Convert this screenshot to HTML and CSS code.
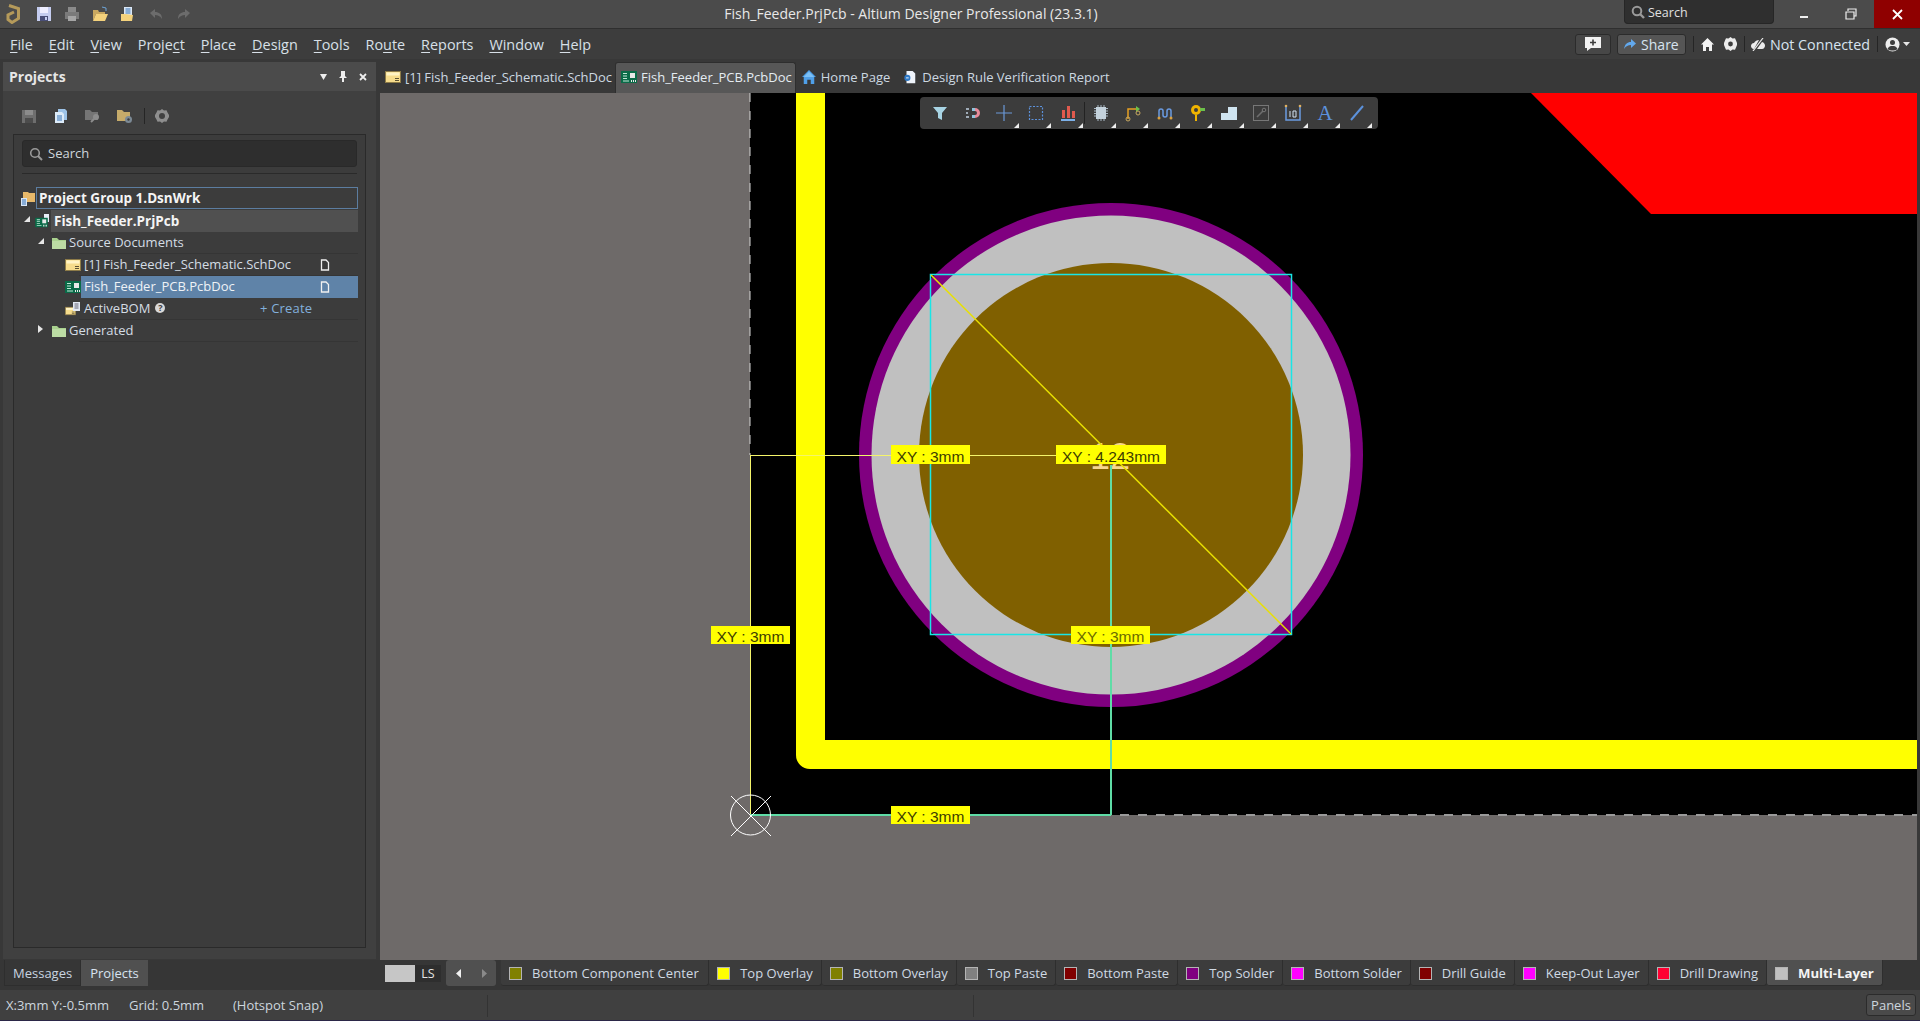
FILE: index.html
```html
<!DOCTYPE html>
<html lang="en">
<head>
  <meta charset="UTF-8">
  <title>Fish_Feeder.PrjPcb - Altium Designer Professional (23.3.1)</title>
  <link rel="stylesheet" href="styles.css">
</head>
<body>
<svg class="defs" width="0" height="0">
  <symbol id="pcbdoc" viewBox="0 0 16 14"><rect y="1" width="16" height="12" fill="#0a6b48"/><path d="M2 3h4v1H2zM2 5.500h4v1H2zM2 8h4v1H2zM2 10.500h6v1H2z" fill="#bfe8d5"/><rect x="9" y="3" width="5" height="5" fill="#e8e8e8"/><path d="M10 10h1v2h-1zM12 10h1v2h-1zM14 10h1v2h-1z" fill="#e8e8e8"/></symbol>
  <symbol id="schdoc" viewBox="0 0 16 14"><rect x=".5" y="1.500" width="15" height="11" fill="#f6dc8c" stroke="#8d7b48"/><rect x="1.500" y="2.500" width="13" height="3" fill="#fff3c4"/><path d="M10 8.500h4M10 10.500h4" stroke="#5c5233"/></symbol>
  <symbol id="folder" viewBox="0 0 16 14"><path d="M1 2h5l2 2h7v9H1z" fill="#a9d18e"/><path d="M1 5h14v8H1z" fill="#bcdca4"/></symbol>
  <symbol id="arrow-open" viewBox="0 0 6 6"><path d="M6 0v6H0z" fill="#e6e6e6"/></symbol>
  <symbol id="arrow-closed" viewBox="0 0 6 8"><path d="M0 0l5 4-5 4z" fill="#e6e6e6"/></symbol>
  <symbol id="page" viewBox="0 0 10 12"><path d="M1.500 1h4.500l2.500 2.500V11h-7z" fill="none" stroke="#f0f0f0" stroke-width="1.300"/></symbol>
</svg>

<header class="titlebar">
  <div class="quick">
    <svg class="logo" width="16" height="20" viewBox="0 0 16 20"><path d="M3 1.500l9.500 3v10l-6.500 4-4-3V11l6-3" fill="none" stroke="#b59a5a" stroke-width="3"/></svg>
    <svg class="qa" viewBox="0 0 16 16"><path d="M1 1h14v14H1z" fill="#c5cdf0"/><path d="M4 1h8v6H4z" fill="#eef"/><path d="M4 10h8v5H4z" fill="#4a4f78"/><path d="M9 11h2v3H9z" fill="#c5cdf0"/></svg>
    <svg class="qa" viewBox="0 0 16 16"><path d="M4 1h8v5H4z" fill="#8a8a8a"/><path d="M1 6h14v7H1z" fill="#7a7a7a"/><path d="M4 10h8v5H4z" fill="#a5a5a5"/></svg>
    <svg class="qa" viewBox="0 0 16 16"><path d="M1 4h5l1 2h6v2H4l-3 7z" fill="#c9a860"/><path d="M4 8h12l-3 7H1z" fill="#f4d27c"/><path d="M10 1l4 1v3" fill="none" stroke="#6ea5d8"/></svg>
    <svg class="qa" viewBox="0 0 16 16"><path d="M4 1h8v9H4z" fill="#dbe8f6"/><path d="M5.500 3h5M5.500 5h5M5.500 7h5" stroke="#3672b5"/><path d="M1 8h4l8 1-1 6H1z" fill="#f4d27c"/></svg>
    <svg class="qa" viewBox="0 0 16 16"><path d="M2 7l5-4v3c4 0 7 2 7 7-2-3-4-4-7-4v3z" fill="#6c6c6c"/></svg>
    <svg class="qa" viewBox="0 0 16 16"><path d="M14 7L9 3v3C5 6 2 8 2 13c2-3 4-4 7-4v3z" fill="#6c6c6c"/></svg>
  </div>
  <div class="app-title">Fish_Feeder.PrjPcb - Altium Designer Professional (23.3.1)</div>
  <div class="title-search">
    <svg width="14" height="14" viewBox="0 0 14 14"><circle cx="6" cy="6" r="4.300" fill="none" stroke="#9a9a9a" stroke-width="2"/><path d="M9 9l4 4" stroke="#9a9a9a" stroke-width="2.400"/></svg>
    <span>Search</span>
  </div>
  <div class="win-btn">
    <svg width="10" height="10" viewBox="0 0 10 10"><path d="M1 8h8" stroke="#eee" stroke-width="2"/></svg>
  </div>
  <div class="win-btn">
    <svg width="12" height="12" viewBox="0 0 12 12"><path d="M3 3V1h8v7H9M1 4h8v7H1z" fill="none" stroke="#eee" stroke-width="1.200"/></svg>
  </div>
  <div class="win-btn close">
    <svg width="11" height="11" viewBox="0 0 11 11"><path d="M1 1l9 9M10 1l-9 9" stroke="#fff" stroke-width="1.800"/></svg>
  </div>
</header>

<div class="menubar">
  <nav class="menu">
    <span><u>F</u>ile</span>
    <span><u>E</u>dit</span>
    <span><u>V</u>iew</span>
    <span>Proje<u>c</u>t</span>
    <span><u>P</u>lace</span>
    <span><u>D</u>esign</span>
    <span><u>T</u>ools</span>
    <span>Ro<u>u</u>te</span>
    <span><u>R</u>eports</span>
    <span><u>W</u>indow</span>
    <span><u>H</u>elp</span>
  </nav>
  <div class="account">
    <button class="chip feedback">
      <svg width="18" height="16" viewBox="0 0 18 16"><path d="M1 1h16v11H7l-4 3v-3H1z" fill="#f2f2f2"/><path d="M9 3.500v6M6 6.500h6" stroke="#3d3d3d" stroke-width="1.600"/></svg>
    </button>
    <button class="chip share">
      <svg width="12" height="11" viewBox="0 0 12 11"><path d="M12 4.500L7 0v3C3 3 1 5 0 10c2-3 4-4 7-4v3z" fill="#62a8ec"/></svg>
      Share
    </button>
    <i class="vsep"></i>
    <svg class="home-ic" width="13" height="13" viewBox="0 0 13 13"><path d="M6.500 0L13 6.500h-2V13H8V9H5v4H2V6.500H0z" fill="#f2f2f2"/></svg>
    <svg class="gear-ic" width="13" height="14" viewBox="0 0 13 14"><path d="M6.500 0l2 1.500 2.500-.3 1 2.300L13 6v2l-1 2.500-1 2.300-2.500-.3L6.500 14l-2-1.500-2.500.3-1-2.300L0 8V6l1-2.500 1-2.300 2.500.3z" fill="#ececec"/><circle cx="6.500" cy="7" r="2.400" fill="#3d3d3d"/></svg>
    <i class="vsep"></i>
    <svg class="cloud-ic" width="14" height="13" viewBox="0 0 14 13"><path d="M3 11C1 11 0 9.500 0 8s1-3 3-3c1-2 3-3 5-3l-5 9zM6 11l5-7c2 .5 3 2 3 3.500S13 11 11 11z" fill="#ececec"/><path d="M2 13L12 0" stroke="#ececec" stroke-width="1.200"/></svg>
    <span class="not-connected">Not Connected</span>
    <i class="vsep"></i>
    <svg class="user-ic" width="15" height="15" viewBox="0 0 15 15"><circle cx="7.500" cy="7.500" r="7" fill="#ededed"/><circle cx="7.500" cy="5.500" r="2.500" fill="#3d3d3d"/><path d="M2.500 12c1-2.500 3-3 5-3s4 .5 5 3c-2.500 2-7.500 2-10 0z" fill="#3d3d3d"/></svg>
    <svg class="caret-ic" width="7" height="4" viewBox="0 0 7 4"><path d="M0 0h7L3.500 4z" fill="#e6e6e6"/></svg>
  </div>
</div>

<main class="workspace">
  <aside class="panel">
    <div class="panel-head">
      <strong>Projects</strong>
      <div class="panel-ctl">
        <svg width="7" height="6" viewBox="0 0 7 6"><path d="M0 0h7L3.500 6z" fill="#eee"/></svg>
        <svg width="8" height="11" viewBox="0 0 8 11"><path d="M2 0h4v5l2 2H5v4H3V7H0l2-2z" fill="#eee"/></svg>
        <svg width="8" height="8" viewBox="0 0 8 8"><path d="M1 1l6 6M7 1L1 7" stroke="#eee" stroke-width="1.800"/></svg>
      </div>
    </div>
    <div class="panel-tools">
      <svg viewBox="0 0 16 16"><path d="M1 2h14v13H1z" fill="#6e6e6e"/><path d="M4 2h8v5H4z" fill="#8c8c8c"/><path d="M4 10h8v5H4z" fill="#4c4c4c"/></svg>
      <svg viewBox="0 0 16 16"><path d="M5 1h7l2 2v9H5z" fill="#9dc3e8"/><path d="M2 4h7l2 2v9H2z" fill="#dcebf9"/><path d="M4 8h5M4 10h5M4 12h5" stroke="#3672b5"/></svg>
      <svg viewBox="0 0 16 16"><path d="M0 2h5l2 2h6v8H0z" fill="#757575"/><circle cx="11" cy="9" r="3" fill="#8d8d8d"/><path d="M9 11l-3 3" stroke="#8d8d8d" stroke-width="2"/></svg>
      <svg viewBox="0 0 16 16"><path d="M0 2h5l2 2h6v9H0z" fill="#c6ab6a"/><circle cx="11.500" cy="11.500" r="3.500" fill="#7c8a96"/><circle cx="11.500" cy="11.500" r="1.200" fill="#3d3d3d"/></svg>
      <i class="vsep"></i>
      <svg viewBox="0 0 16 16"><path d="M8 1l2 1.500 2.500-.3 1 2.300L15 7v2l-1.500 2.500-1 2.300-2.500-.3L8 15l-2-1.500-2.500.3-1-2.300L1 9V7l1.500-2.500 1-2.300 2.500.3z" fill="#8e8e8e"/><circle cx="8" cy="8" r="3" fill="#404040"/></svg>
    </div>
    <div class="tree-box">
      <div class="panel-search">
        <svg width="14" height="14" viewBox="0 0 14 14"><circle cx="6" cy="6" r="4.300" fill="none" stroke="#9a9a9a" stroke-width="1.600"/><path d="M9 9l4 4" stroke="#9a9a9a" stroke-width="2"/></svg>
        <span>Search</span>
      </div>
      <div class="tree">
        <div class="row group">
          <svg class="ic" viewBox="0 0 16 14"><path d="M3 0h5l1 1h6v9H3z" fill="#e8b96a"/><path d="M1 6h6v8H1z" fill="#d8e6f6"/><path d="M2 8h4M2 10h4M2 12h4" stroke="#3672b5"/></svg>
          <div class="cell sel-box"><b>Project Group 1.DsnWrk</b></div>
        </div>
        <div class="row d1">
          <svg class="tw"><use href="#arrow-open" width="6" height="6" y="6"/></svg>
          <svg class="ic" viewBox="0 0 16 14"><path d="M9 0h5v8H9z" fill="#e8eef8"/><use href="#pcbdoc" y="3" width="13" height="11"/></svg>
          <div class="cell focus"><b>Fish_Feeder.PrjPcb</b></div>
        </div>
        <div class="row d2 ruled">
          <svg class="tw"><use href="#arrow-open" width="6" height="6" y="6"/></svg>
          <svg class="ic"><use href="#folder"/></svg>
          <div class="cell">Source Documents</div>
        </div>
        <div class="row d3 ruled">
          <svg class="ic"><use href="#schdoc"/></svg>
          <div class="cell">[1] Fish_Feeder_Schematic.SchDoc<svg class="pg"><use href="#page"/></svg></div>
        </div>
        <div class="row d3">
          <svg class="ic"><use href="#pcbdoc"/></svg>
          <div class="cell active">Fish_Feeder_PCB.PcbDoc<svg class="pg"><use href="#page"/></svg></div>
        </div>
        <div class="row d3 ruled">
          <svg class="ic" viewBox="0 0 16 14"><use href="#schdoc" width="11" height="10" y="4"/><path d="M8 0h7v9H8z" fill="#e2e8f2"/><path d="M9.500 2h4M9.500 4h4M9.500 6h4" stroke="#667"/></svg>
          <div class="cell">ActiveBOM <span class="help">?</span><span class="create">+ Create</span></div>
        </div>
        <div class="row d2 ruled">
          <svg class="tw"><use href="#arrow-closed" width="6" height="8" y="5"/></svg>
          <svg class="ic"><use href="#folder"/></svg>
          <div class="cell">Generated</div>
        </div>
      </div>
    </div>
  </aside>

  <section class="docs">
    <div class="doc-tabs">
      <div class="doc-tab"><svg class="ic"><use href="#schdoc"/></svg>[1] Fish_Feeder_Schematic.SchDoc</div>
      <div class="doc-tab on"><svg class="ic"><use href="#pcbdoc"/></svg>Fish_Feeder_PCB.PcbDoc</div>
      <div class="doc-tab"><svg class="ic" viewBox="0 0 16 16"><path d="M8 0L0 8h2v8h4v-5h4v5h4V8h2z" fill="#4f9fe8"/><path d="M8 2L2 8h12z" fill="#7cc0f5"/></svg>Home Page</div>
      <div class="doc-tab report"><svg class="ic" viewBox="0 0 16 16"><path d="M4 1h7l3 3v11H4z" fill="#eef3fa"/><circle cx="5" cy="9" r="3.500" fill="#2e79c7"/><path d="M3.500 9h3" stroke="#fff"/></svg>Design Rule Verification Report</div>
    </div>
    <div class="canvas">
      <svg class="board" viewBox="380 93 1537 867" width="1537" height="867">
        <rect x="380" y="93" width="1537" height="867" fill="#6e6a69"/>
        <rect x="750" y="93" width="1167" height="722" fill="#000"/>
        <path d="M750 93V455" stroke="#d8d8d8" stroke-dasharray="9 9"/>
        <path d="M1120 815H1917" stroke="#9a9a9a" stroke-width="2" stroke-dasharray="9 9"/>
        <path d="M1531 93H1917V214H1651Z" fill="#f00"/>
        <path d="M796 93V755A14 14 0 0 0 810 769H1917V740H825V93Z" fill="#ff0"/>
        <circle cx="1111" cy="455" r="252" fill="#800080"/>
        <circle cx="1111" cy="455" r="239.500" fill="#c0c0c0"/>
        <circle cx="1111" cy="455" r="192" fill="#806000"/>
        <text class="pad-no" x="1090" y="469">12</text>
        <rect x="930.500" y="274.500" width="361" height="360" fill="none" stroke="#19e6e6" stroke-width="1.500"/>
        <path d="M931 275L1291 634" stroke="#e8e000" stroke-width="1.500"/>
        <path d="M750 455.500H1111M750.500 455V815" stroke="#f4f46a" stroke-width="1"/>
        <path d="M1111 465V815M750 815H1111" stroke="#5fdca6" stroke-width="2"/>
        <g class="dim">
          <rect x="891" y="445" width="79" height="19"/><text x="930.500" y="462">XY : 3mm</text>
          <rect x="1056" y="445" width="110" height="19"/><text x="1111" y="462">XY : 4.243mm</text>
          <rect x="711" y="626" width="79" height="18"/><text x="750.500" y="642">XY : 3mm</text>
          <rect x="1071" y="626" width="79" height="18"/><text x="1110.500" y="642" class="soft">XY : 3mm</text>
          <rect x="891" y="806" width="79" height="18"/><text x="930.500" y="822">XY : 3mm</text>
        </g>
        <g fill="none" stroke="#fff">
          <circle cx="750.500" cy="815" r="20"/>
          <path d="M731 796L771 836M771 796L731 836"/>
        </g>
      </svg>
      <div class="pcb-tools">
        <button class="tool plain"><svg viewBox="0 0 18 18"><path d="M2 3h14l-5 6v7l-4-2V9z" fill="#a8d4e4"/></svg></button>
        <button class="tool plain"><svg viewBox="0 0 18 18"><path d="M9 4h3a5 5 0 0 1 0 10H9v-3h3a2 2 0 0 0 0-4H9z" fill="#e88a9a"/><path d="M9 4h3v3H9zM9 11h3v3H9z" fill="#8fc4dc"/><path d="M3 5h3M3 9h2M3 13h3" stroke="#c0d0e0" stroke-width="1.500"/></svg></button>
        <button class="tool"><svg viewBox="0 0 18 18"><path d="M9 1v16M1 9h16" stroke="#6a98d8" stroke-width="1.200"/></svg></button>
        <button class="tool"><svg viewBox="0 0 18 18"><rect x="2.500" y="2.500" width="13" height="13" fill="none" stroke="#5c92dc" stroke-width="1.200" stroke-dasharray="2 1.500"/></svg></button>
        <button class="tool"><svg viewBox="0 0 18 18"><path d="M3 6h3v8H3zM8 2h3v12H8zM13 7h3v7h-3z" fill="#e05a4e"/><path d="M2 16h14" stroke="#7cb0e8" stroke-width="2"/></svg></button>
        <i class="tool-sep"></i>
        <button class="tool"><svg viewBox="0 0 18 18"><rect x="4" y="3" width="10" height="12" fill="#c4d2dc"/><path d="M2 4.500h2M2 7h2M2 9.500h2M2 12h2M14 4.500h2M14 7h2M14 9.500h2M14 12h2M6 1v2M9 1v2M12 1v2M6 15v2M9 15v2M12 15v2" stroke="#a8b8c4"/></svg></button>
        <button class="tool"><svg viewBox="0 0 18 18"><path d="M4 15V5h9" fill="none" stroke="#e8a020" stroke-width="1.500"/><path d="M12 2l4 3-4 3z" fill="#6cc04a"/><circle cx="4" cy="15" r="2" fill="none" stroke="#c8a860"/><circle cx="14" cy="9" r="2" fill="none" stroke="#c8a860"/></svg></button>
        <button class="tool"><svg viewBox="0 0 18 18"><path d="M3 13V7a2 2 0 0 1 4 0v4a2 2 0 0 0 4 0V7a2 2 0 0 1 4 0v6" fill="none" stroke="#6a9ae0" stroke-width="1.500"/><circle cx="3" cy="14" r="1.500" fill="#d8a040"/><circle cx="15" cy="14" r="1.500" fill="#d8a040"/></svg></button>
        <button class="tool"><svg viewBox="0 0 18 18"><circle cx="8" cy="6" r="5" fill="#f0b400"/><circle cx="8" cy="6" r="2" fill="#3c3c3c"/><path d="M7 11h2v6H7z" fill="#f0b400"/><path d="M12 4h5v3h-5z" fill="#6cc04a"/></svg></button>
        <button class="tool"><svg viewBox="0 0 18 18"><path d="M1 9h7V3h9v13H1z" fill="#cfe4f0"/></svg></button>
        <button class="tool"><svg viewBox="0 0 18 18"><rect x="1.500" y="1.500" width="15" height="15" fill="none" stroke="#777"/><path d="M5 13l6-6" stroke="#6d6d6d" stroke-width="1.600"/><circle cx="12" cy="6" r="1.800" fill="none" stroke="#777"/></svg></button>
        <button class="tool"><svg viewBox="0 0 18 18"><path d="M2 2v14h14V2" fill="none" stroke="#6a9ae0" stroke-width="1.500"/><circle cx="2" cy="2" r="1.300" fill="#e0b060"/><circle cx="16" cy="2" r="1.300" fill="#e0b060"/><path d="M6 7v6M9 7h3v6H9z" fill="none" stroke="#cfe0f0"/></svg></button>
        <button class="tool letter">A</button>
        <button class="tool"><svg viewBox="0 0 18 18"><path d="M3 16L15 2" stroke="#5c92dc" stroke-width="2"/></svg></button>
      </div>
    </div>
  </section>
</main>

<div class="strip">
  <div class="side-tabs">
    <span>Messages</span>
    <span class="on">Projects</span>
  </div>
  <div class="current-layer"><i></i><b>LS</b></div>
  <div class="layer-nav">
    <svg width="6" height="9" viewBox="0 0 6 9"><path d="M5 0v9L0 4.500z" fill="#f0f0f0"/></svg>
    <svg width="6" height="9" viewBox="0 0 6 9"><path d="M1 0v9l5-4.500z" fill="#8a8a8a"/></svg>
  </div>
  <div class="layers">
    <div class="layer"><i class="c-olive"></i>Bottom Component Center</div>
    <div class="layer"><i class="c-yellow"></i>Top Overlay</div>
    <div class="layer"><i class="c-olive"></i>Bottom Overlay</div>
    <div class="layer"><i class="c-grey"></i>Top Paste</div>
    <div class="layer"><i class="c-maroon"></i>Bottom Paste</div>
    <div class="layer"><i class="c-purple"></i>Top Solder</div>
    <div class="layer"><i class="c-pink"></i>Bottom Solder</div>
    <div class="layer"><i class="c-maroon"></i>Drill Guide</div>
    <div class="layer"><i class="c-pink"></i>Keep-Out Layer</div>
    <div class="layer"><i class="c-red"></i>Drill Drawing</div>
    <div class="layer on"><i class="c-silver"></i>Multi-Layer</div>
  </div>
</div>

<footer class="status">
  <span class="coords">X:3mm Y:-0.5mm</span>
  <span class="grid">Grid: 0.5mm</span>
  <span class="snap">(Hotspot Snap)</span>
  <i class="stat-sep first"></i>
  <i class="stat-sep second"></i>
  <button class="panels">Panels</button>
</footer>
</body>
</html>
```

FILE: styles.css
```css
* { box-sizing: border-box; }
html, body { margin: 0; height: 100%; }
body { width: 1920px; height: 1021px; overflow: hidden; display: flex; flex-direction: column; font-family: "Open Sans", "Noto Sans", sans-serif; font-size: 13px; color: #d4dce4; background: #3d3d3d; }
svg { display: block; flex: none; }
.defs { position: absolute; }
button { font: inherit; color: inherit; }
u { text-underline-offset: 2px; }
.ic { width: 16px; height: 14px; }

.titlebar { height: 29px; flex: none; display: flex; align-items: flex-start; background: #4b4b4b; border-bottom: 1px solid #2f2f2f; }
.quick { width: 596px; height: 28px; display: flex; align-items: center; padding-left: 6px; }
.logo { margin-right: 14px; }
.qa { width: 16px; height: 16px; margin-right: 12px; }
.app-title { width: 630px; height: 28px; line-height: 28px; text-align: center; font-size: 14px; color: #e8e8e8; }
.title-search { width: 150px; height: 24px; margin-left: 398px; margin-right: 6px; display: flex; align-items: center; gap: 3px; padding-left: 6px; background: #2f2f2f; border: 1px solid #262626; border-top: 0; border-radius: 0 0 4px 4px; font-size: 12.500px; color: #e0e0e0; }
.title-search span { padding-top: 1px; }
.win-btn { width: 47px; height: 28px; display: flex; align-items: center; justify-content: center; }
.win-btn.close { width: 46px; background: #8f0000; }

.menubar { height: 30px; flex: none; display: flex; align-items: center; justify-content: space-between; background: #3d3d3d; padding: 0 0 0 2px; }
.menu { display: flex; }
.menu span { padding: 0 8px; font-size: 14.400px; color: #d8e0e8; }
.account { display: flex; align-items: center; font-size: 14.300px; padding-right: 9px; }
.chip { height: 21px; display: flex; align-items: center; justify-content: center; border: 1px solid #2b2b2b; border-radius: 3px; background: #474747; padding: 0; }
.feedback { width: 36px; margin-right: 6px; }
.share { width: 69px; gap: 5px; background: #555; color: #d8e4f0; font-size: 14px; }
.vsep { width: 1px; height: 16px; background: #252525; flex: none; }
.account > .vsep:nth-of-type(1) { margin-left: 7px; }
.home-ic { margin-left: 7px; }
.gear-ic { margin-left: 10px; margin-right: 7px; }
.cloud-ic { margin-left: 6px; margin-right: 5px; }
.not-connected { margin-right: 7px; color: #d8e4f0; }
.user-ic { margin-left: 7px; margin-right: 3px; }
.caret-ic { margin-right: 1px; }

.workspace { flex: 1; min-height: 0; display: flex; background: #383838; }
.panel { width: 373px; margin: 3px 0 1px 3px; background: #404040; display: flex; flex-direction: column; padding-bottom: 11px; }
.panel-head { height: 29px; flex: none; display: flex; align-items: center; justify-content: space-between; padding: 0 9px 0 6px; background: #4b4b4b; }
.panel-head strong { font-size: 14px; color: #e6e6e6; }
.panel-ctl { display: flex; align-items: center; gap: 12px; }
.panel-tools { height: 43px; flex: none; display: flex; align-items: center; padding: 6px 0 0 18px; }
.panel-tools svg { width: 16px; height: 16px; margin-right: 16px; }
.panel-tools .vsep { margin-right: 9px; margin-left: -5px; }

.tree-box { flex: 1; margin: 0 10px; background: #3c3c3c; border: 1px solid #2a2a2a; }
.panel-search { height: 27px; margin: 5px 8px 0; display: flex; align-items: center; gap: 5px; padding-left: 6px; background: #2e2e2e; border: 1px solid #292929; border-radius: 3px; font-size: 13px; color: #cfd6dc; }
.panel-search span { padding-bottom: 2px; }
.tree { margin-top: 6px; border-top: 1px solid #2a2a2a; margin-left: 8px; margin-right: 8px; padding-top: 14px; }
.row { height: 22px; margin-left: -8px; margin-right: -1px; display: flex; align-items: stretch; }
.row .ic { align-self: center; }
.tw { width: 6px; height: 22px; }
.cell { flex: 1; display: flex; align-items: center; padding: 0 0 2px 3px; position: relative; }
.cell b { color: #f4f4f4; font-size: 13.500px; }
.group { padding-left: 6px; }
.sel-box { border: 1px solid #5c7da0; margin-top: -1px; height: 22px; padding: 0 0 0 2px; }
.d1 { padding-left: 10px; }
.d1 .tw { margin-right: 5px; }
.focus { background: #505050; padding: 0 0 0 3px; }
.d2 { padding-left: 24px; }
.d2 .tw { margin-right: 7px; }
.d2 .cell { padding-left: 2px; }
.d3 { padding-left: 51px; }
.ruled { position: relative; }
.ruled::after { content: ""; position: absolute; left: 65px; right: 0; bottom: 0; height: 1px; background: #353535; }
.active { background: #5f83a8; color: #eef2f6; }
.pg { width: 10px; height: 12px; position: absolute; left: 239px; top: 5px; }
.help { display: inline-block; width: 10px; height: 10px; margin-left: 5px; border-radius: 50%; background: #d8d8d8; color: #3c3c3c; font-size: 9px; line-height: 10px; text-align: center; font-weight: bold; }
.create { position: absolute; left: 179px; color: #82b0dc; letter-spacing: .2px; }

.docs { flex: 1; min-width: 0; display: flex; flex-direction: column; margin-left: 4px; margin-right: 3px; }
.doc-tabs { height: 34px; flex: none; display: flex; align-items: flex-end; }
.doc-tab { height: 31px; display: flex; align-items: center; gap: 4px; padding: 0 3px 2px 5px; color: #cdd8e2; white-space: nowrap; font-size: 13px; }
.doc-tab.on { background: #575757; border: 1px solid #2e2e2e; border-bottom: 0; border-radius: 3px 3px 0 0; color: #e4ecf2; }
.doc-tab.report { margin-left: 4px; }
.canvas { flex: 1; position: relative; overflow: hidden; }
.dim rect { fill: #ff0; }
.dim text { font-family: "Liberation Sans", sans-serif; font-size: 15.500px; text-anchor: middle; fill: #3c3c00; }
.dim text.soft { fill: #6a6a00; }
.pad-no { font-family: "Liberation Sans", sans-serif; font-size: 36px; fill: #f7d78e; }
.pcb-tools { position: absolute; left: 540px; top: 4px; width: 458px; height: 32px; display: flex; align-items: center; padding-left: 4px; background: #3c3c3c; border-radius: 4px; }
.tool { width: 32px; height: 32px; padding: 0; border: 0; background: none; position: relative; display: flex; align-items: center; justify-content: center; }
.tool svg { width: 18px; height: 18px; }
.tool::after { content: ""; position: absolute; right: 1px; bottom: 1px; border-style: solid; border-width: 0 0 5px 5px; border-color: transparent transparent #eee transparent; }
.tool.plain::after { display: none; }
.tool-sep { width: 1px; height: 22px; background: #222; flex: none; }
.letter { font-family: "Liberation Serif", serif; font-size: 21px; color: #5c92dc; }

.strip { height: 30px; flex: none; display: flex; align-items: flex-start; background: #363636; }
.side-tabs { width: 385px; display: flex; padding-left: 4px; }
.side-tabs span { height: 26px; line-height: 27px; padding: 0 8px; border: 1px solid #2e2e2e; border-top: 0; color: #c8d4e0; }
.side-tabs span.on { background: #505050; border-color: #505050; color: #d8e4f0; }
.current-layer { width: 56px; height: 17px; margin-top: 5px; display: flex; background: #2e2e2e; }
.current-layer i { width: 30px; background: #c6c6c6; }
.current-layer b { flex: 1; text-align: center; font-weight: normal; line-height: 17px; font-size: 12.500px; color: #e4e4e4; background: #2e2e2e; }
.layer-nav { width: 50px; height: 26px; margin-left: 5px; display: flex; align-items: center; justify-content: space-around; background: #505050; border-radius: 3px; }
.layers { display: flex; margin-left: 5px; }
.layer { height: 26px; display: flex; align-items: center; gap: 10px; padding: 1px 8px 0; border-right: 1px solid #2e2e2e; border-bottom: 1px solid #2e2e2e; border-radius: 0 0 3px 3px; background: #3c3c3c; color: #d0dae4; white-space: nowrap; }
.layer:first-child { letter-spacing: .1px; padding-right: 9.400px; }
.layer i { width: 13px; height: 13px; border: 1px solid #b4b4b4; flex: none; }
.layer.on { background: #505050; color: #f4f4f4; font-weight: bold; font-size: 13.200px; }
.c-olive { background: #808000; }
.c-yellow { background: #ff0; }
.c-grey { background: #808080; }
.c-maroon { background: #800000; }
.c-purple { background: #800080; }
.c-pink { background: #f0f; }
.c-red { background: #ff0033; }
.c-silver { background: #c0c0c0; }

.status { height: 31px; flex: none; display: flex; align-items: center; background: #404040; border-bottom: 1px solid #2b2748; position: relative; color: #cdd6de; }
.coords { width: 129px; padding-left: 6px; }
.grid { width: 104px; }
.stat-sep { position: absolute; top: 5px; width: 1px; height: 22px; background: #333; }
.stat-sep.first { left: 487px; }
.stat-sep.second { left: 973px; }
.panels { position: absolute; right: 4px; top: 4px; width: 50px; height: 22px; padding: 0; background: #4a4a4a; border: 1px solid #2b2b2b; border-radius: 3px; }
```
